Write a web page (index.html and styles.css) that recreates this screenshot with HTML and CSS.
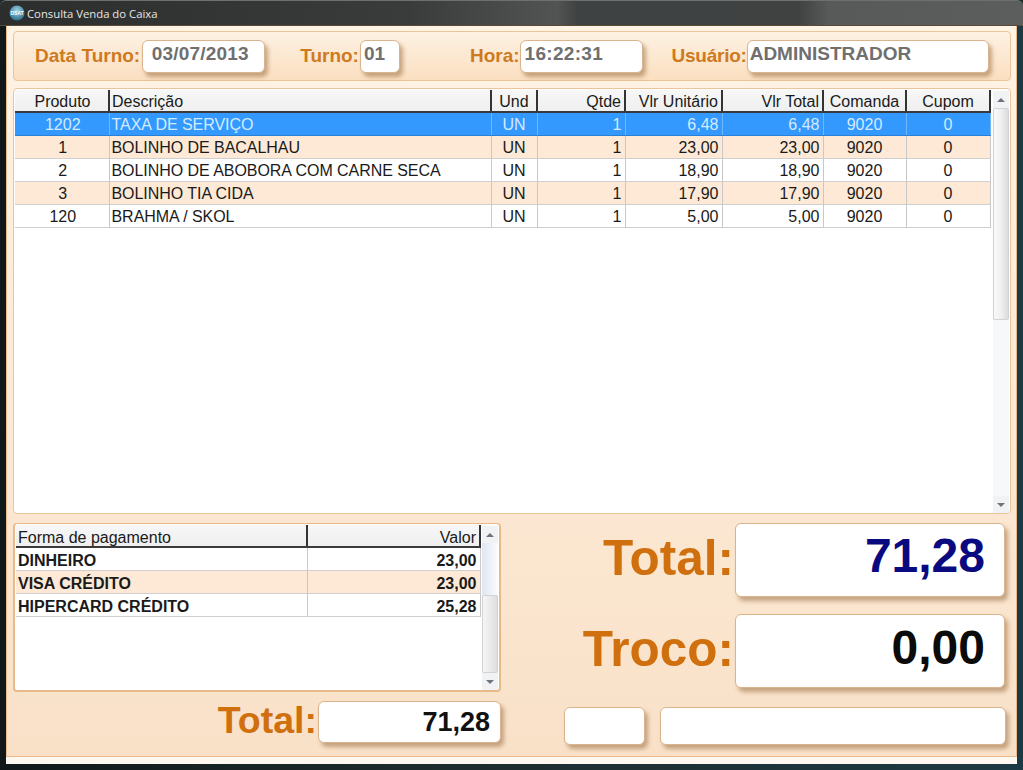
FILE: index.html
```html
<!DOCTYPE html>
<html lang="pt">
<head>
<meta charset="utf-8">
<title>Consulta Venda do Caixa</title>
<link rel="stylesheet" href="styles.css">
</head>
<body>
<div class="window">
  <div class="titlebar">
    <svg class="app-icon" width="16" height="16" viewBox="0 0 16 16" aria-hidden="true">
      <defs><radialGradient id="orb" cx="50%" cy="35%" r="65%"><stop offset="0" stop-color="#9fd4e6"/><stop offset="1" stop-color="#2b6f8c"/></radialGradient></defs>
      <circle cx="8" cy="8" r="7.5" fill="url(#orb)"/>
      <text x="8" y="10" text-anchor="middle" class="app-icon-text">DSAT</text>
    </svg>
    <span class="title-text">Consulta Venda do Caixa</span>
  </div>
  <div class="client">
    <div class="main">
      <div class="panel header-panel">
        <div class="group"><span class="label">Data Turno:</span><span class="field field-date">03/07/2013</span></div>
        <div class="group group-turno"><span class="label">Turno:</span><span class="field field-turno">01</span></div>
        <div class="group group-hora"><span class="label">Hora:</span><span class="field field-hora">16:22:31</span></div>
        <div class="group group-user"><span class="label label-user">Usuário:</span><span class="field field-user">ADMINISTRADOR</span></div>
      </div>

      <div class="panel grid-panel">
        <table class="grid items">
          <colgroup>
            <col class="c-prod"><col class="c-desc"><col class="c-und"><col class="c-qtd"><col class="c-unit"><col class="c-total"><col class="c-com"><col class="c-cup">
          </colgroup>
          <thead>
            <tr><th>Produto</th><th class="l">Descrição</th><th>Und</th><th class="r">Qtde</th><th class="r">Vlr Unitário</th><th class="r">Vlr Total</th><th>Comanda</th><th>Cupom</th></tr>
          </thead>
          <tbody>
            <tr class="sel"><td>1202</td><td class="l">TAXA DE SERVIÇO</td><td>UN</td><td class="r">1</td><td class="r">6,48</td><td class="r">6,48</td><td>9020</td><td>0</td></tr>
            <tr class="alt"><td>1</td><td class="l">BOLINHO DE BACALHAU</td><td>UN</td><td class="r">1</td><td class="r">23,00</td><td class="r">23,00</td><td>9020</td><td>0</td></tr>
            <tr><td>2</td><td class="l">BOLINHO DE ABOBORA COM CARNE SECA</td><td>UN</td><td class="r">1</td><td class="r">18,90</td><td class="r">18,90</td><td>9020</td><td>0</td></tr>
            <tr class="alt"><td>3</td><td class="l">BOLINHO TIA CIDA</td><td>UN</td><td class="r">1</td><td class="r">17,90</td><td class="r">17,90</td><td>9020</td><td>0</td></tr>
            <tr><td>120</td><td class="l">BRAHMA / SKOL</td><td>UN</td><td class="r">1</td><td class="r">5,00</td><td class="r">5,00</td><td>9020</td><td>0</td></tr>
          </tbody>
        </table>
        <div class="scrollbar">
          <span class="arrow up"></span>
          <span class="thumb thumb-items"></span>
          <span class="track"></span>
          <span class="arrow down"></span>
        </div>
      </div>

      <div class="bottom">
        <div class="bottom-left">
          <div class="panel pay-panel">
            <table class="grid pay">
              <colgroup><col class="c-forma"><col class="c-valor"></colgroup>
              <thead><tr><th class="l">Forma de pagamento</th><th class="r">Valor</th></tr></thead>
              <tbody>
                <tr><td class="l">DINHEIRO</td><td class="r">23,00</td></tr>
                <tr class="alt"><td class="l">VISA CRÉDITO</td><td class="r">23,00</td></tr>
                <tr><td class="l">HIPERCARD CRÉDITO</td><td class="r">25,28</td></tr>
              </tbody>
            </table>
            <div class="scrollbar">
              <span class="arrow up"></span>
              <span class="pay-upper"></span>
              <span class="thumb thumb-pay"></span>
              <span class="arrow down"></span>
            </div>
          </div>
          <div class="pay-total">
            <span class="label-md">Total:</span>
            <span class="field field-pay-total">71,28</span>
          </div>
        </div>
        <div class="bottom-right">
          <div class="big-row">
            <span class="label-lg">Total:</span>
            <span class="field field-big blue">71,28</span>
          </div>
          <div class="big-row big-row-troco">
            <span class="label-lg">Troco:</span>
            <span class="field field-big">0,00</span>
          </div>
          <div class="status-row">
            <span class="field status-a"></span>
            <span class="field status-b"></span>
          </div>
        </div>
      </div>
    </div>
  </div>
</div>
</body>
</html>
```

FILE: styles.css
```css
* { box-sizing: border-box; }
html, body { margin: 0; padding: 0; }
body {
  width: 1023px;
  height: 770px;
  overflow: hidden;
  font-family: "Liberation Sans", Arial, sans-serif;
  background: #1c2a2c;
}
.window {
  width: 1023px;
  height: 770px;
  display: flex;
  flex-direction: column;
  border-radius: 6px 6px 0 0;
  background: linear-gradient(90deg, #10181a 0, #1d2b2c 40%, #1c3a44 100%);
}
.titlebar {
  height: 26px;
  flex: none;
  display: flex;
  align-items: center;
  gap: 2px;
  padding: 0 0 0 9px;
  background:
    linear-gradient(90deg, #2c2e2e 0, #3a3b3b 40%, #4e5050 52%, #525353 54.5%, #3f4242 56.5%, #404242 78%, #585a5a 81%, #5c5e5e 100%);
  border-top: 1px solid #6d7071;
  border-bottom: 1px solid #5a4a38;
  border-radius: 6px 6px 0 0;
}
.app-icon { flex: none; }
.app-icon-text { font-size: 5px; font-weight: 700; fill: #fff; font-family: "Liberation Sans", Arial, sans-serif; }
.title-text { color: #e6e6e6; font-family: "Open Sans", "Liberation Sans", sans-serif; font-size: 11.3px; }

.client {
  flex: 1;
  margin: 0 6px 6px 6px;
  background: #fdf8f2;
  padding-bottom: 7px;
  display: flex;
  min-height: 0;
}
.main {
  flex: 1;
  padding: 5px 5px 0 6px;
  margin-right: 1px;
  border: 1px solid #eab98c;
  border-width: 0 1px 1px 1px;
  background: linear-gradient(180deg, #fff3e4 0, #f9e1c8 100%);
  display: flex;
  flex-direction: column;
  gap: 7px;
}
.panel {
  border: 1px solid #eac59c;
  border-radius: 4px;
}
.header-panel {
  flex: none;
  height: 50px;
  display: flex;
  align-items: center;
  padding: 0 20px 0 21px;
  background: linear-gradient(180deg, #fdf1e3 0, #fbdfc0 100%);
}
.group { display: flex; align-items: center; gap: 2px; }
.group-turno { margin-left: 35px; gap: 1px; }
.group-hora { margin-left: 70px; gap: 0; }
.group-user { margin-left: 29px; gap: 0; }
.label {
  color: #cf7a1e;
  font-size: 19px;
  font-weight: 700;
  line-height: 31px;
  padding-bottom: 2px;
  white-space: nowrap;
}
.label-user { letter-spacing: -.25px; }
.field {
  display: block;
  background: #fff;
  border: 1px solid #d9b48c;
  border-radius: 6px;
  box-shadow: 3px 4px 4px rgba(130, 85, 35, .45);
}
.header-panel .field {
  height: 33px;
  margin-top: 1px;
  color: #6f6f6f;
  font-size: 19px;
  font-weight: 700;
  line-height: 26px;
  padding-left: 3px;
}
.field-date { width: 123px; padding-left: 8.5px !important; letter-spacing: .2px; }
.field-turno { width: 40px; }
.field-hora { width: 123px; padding-left: 4px !important; letter-spacing: .3px; }
.field-user { width: 242px; padding-left: 2px !important; }

.grid-panel {
  flex: none;
  height: 426px;
  padding: 1px 1px 0 1px;
  display: flex;
  background: #fff;
}
.grid {
  border-collapse: collapse;
  table-layout: fixed;
  align-self: flex-start;
  font-size: 16px;
  color: #1a1a1a;
}
.items { width: 975px; margin-right: 2px; }
.pay { width: 464px; margin-right: 1px; font-weight: 700; }
.c-prod { width: 94px; }
.c-desc { width: 382px; }
.c-und { width: 46px; }
.c-qtd { width: 88px; }
.c-unit { width: 97px; }
.c-total { width: 101px; }
.c-com { width: 83px; }
.c-cup { width: 84px; }
.c-forma { width: 291px; }
.c-valor { width: 173px; }
.grid th, .grid td {
  height: 23px;
  line-height: 18px;
  padding: 3px 3px 0;
  text-align: center;
  white-space: nowrap;
  overflow: hidden;
}
.grid th {
  height: 22px;
  line-height: 16px;
  font-weight: 400;
  background: linear-gradient(180deg, #f7f7f7 0, #efefef 100%);
  border-right: 2px solid #333;
  border-bottom: 2px solid #3a3a3a;
}
.grid td {
  background: #fff;
  border-right: 1px solid #c8c8c8;
  border-bottom: 1px solid #cfcfcf;
}
.grid .l { text-align: left; padding-left: 2px; }
.grid .r { text-align: right; }
.items th:first-child, .items td:first-child { padding-left: 5px; }
.pay th { padding-top: 4px; }
.pay td { padding-top: 5px; line-height: 16px; }
.items td.l { letter-spacing: -.05px; }
.grid .alt td { background: #fde9d6; }
.grid .sel td {
  background: #3399ff;
  color: #d4ebff;
  border-right-color: #72b6fb;
  border-bottom-color: #2a7fd6;
}

.scrollbar {
  width: 16px;
  flex: none;
  display: flex;
  flex-direction: column;
  background: #f2f4f6;
  margin-top: 1px;
  align-self: stretch;
}
.arrow {
  flex: none;
  height: 17px;
  display: flex;
  align-items: center;
  justify-content: center;
  background: #f0f2f4;
}
.arrow::before {
  content: "";
  border-left: 4px solid transparent;
  border-right: 4px solid transparent;
}
.arrow.up::before { border-bottom: 4px solid #6c7480; }
.arrow.down::before { border-top: 4px solid #6c7480; }
.thumb {
  display: block;
  flex: none;
  background: linear-gradient(90deg, #fafafa 0, #f0f0f0 50%, #dcdcdc 100%);
  border: 1px solid #d0d3d6;
  border-radius: 2px;
}
.thumb-items { height: 212px; }
.track { flex: 1; background: #f7f8f9; }

.bottom {
  flex: 1;
  display: grid;
  grid-template-columns: 488px 1fr;
  margin-top: 2px;
  min-height: 0;
}
.bottom-left { display: flex; flex-direction: column; }
.pay-panel {
  height: 169px;
  flex: none;
  padding: 1px 1px 0 1px;
  display: flex;
  background: #fff;
  border-color: #e8b98a;
  border-width: 1px 2px 2px 2px;
}
.thumb-pay { flex: 1; background: linear-gradient(90deg, #f6f6f6 0, #dedede 100%); }
.pay-upper { height: 52px; flex: none; background: linear-gradient(90deg, #dfe6f0, #fbfcfd); }
.pay-total {
  display: flex;
  align-items: center;
  justify-content: flex-end;
  gap: 1px;
  margin-top: 9px;
}
.label-md { color: #cf6f0e; font-size: 37.5px; font-weight: 700; line-height: 38px; padding-bottom: 4px; }
.field-pay-total {
  width: 183px;
  height: 42px;
  color: #111;
  font-size: 27px;
  font-weight: 700;
  line-height: 40px;
  text-align: right;
  padding-right: 10px;
}
.bottom-right {
  display: flex;
  flex-direction: column;
  align-items: flex-end;
  padding-right: 5px;
}
.big-row { display: flex; align-items: center; gap: 1px; margin-right: 1px; }
.big-row-troco { margin-top: 17px; }
.label-lg { color: #cf6f0e; font-size: 49.5px; font-weight: 700; line-height: 70px; padding-bottom: 4px; }
.field-big {
  width: 270px;
  height: 74px;
  color: #0b0b0b;
  font-size: 48px;
  font-weight: 700;
  line-height: 66px;
  text-align: right;
  padding-right: 19px;
}
.field-big.blue { color: #0a0a80; line-height: 64px; }
.status-row {
  display: flex;
  gap: 15px;
  margin-top: 19px;
}
.status-a { width: 81px; height: 38px; }
.status-b { width: 346px; height: 38px; }
```
